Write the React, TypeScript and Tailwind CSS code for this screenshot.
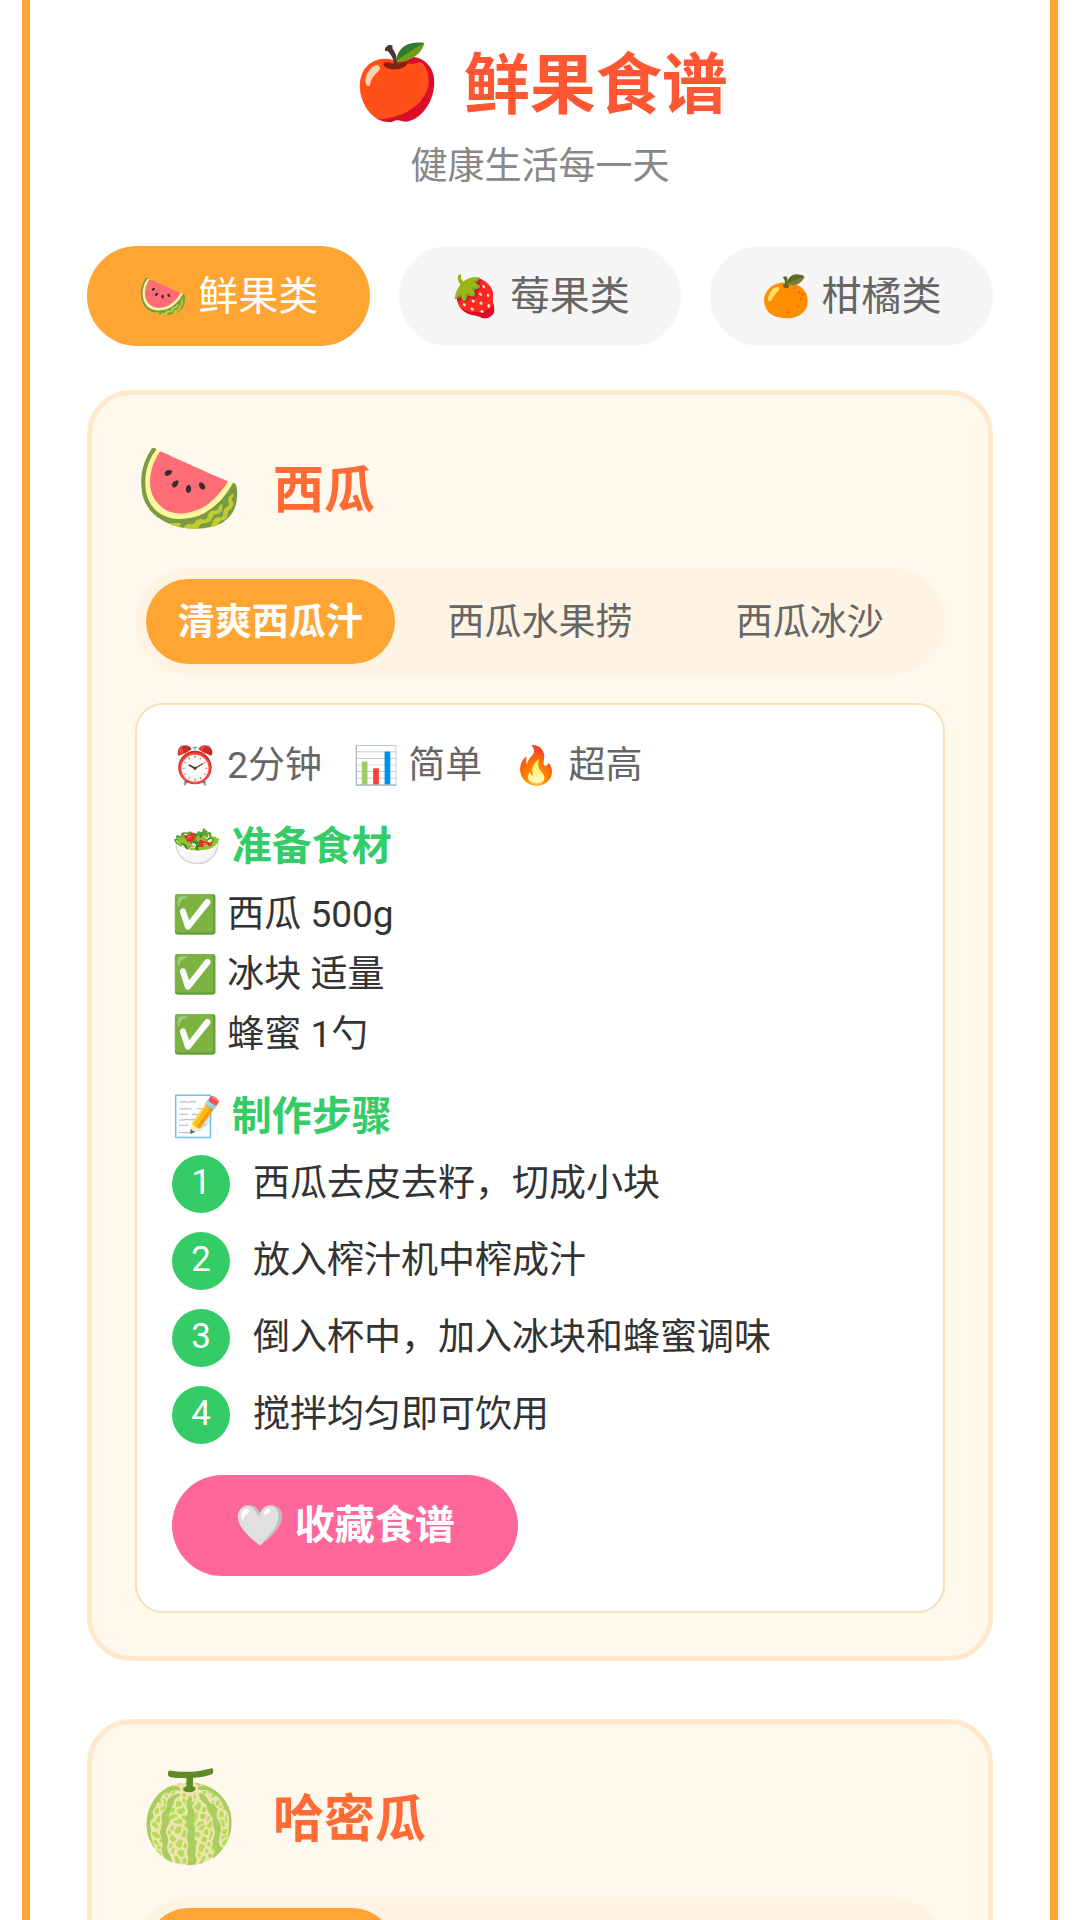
import { useState } from "react";

type Recipe = {
  title: string;
  time?: string;
  level?: string;
  heat?: string;
  ingredients?: string[];
  steps?: string[];
};

type Fruit = {
  icon: string;
  name: string;
  recipes: Recipe[];
};

const categories = [
  { icon: "🍉", label: "鲜果类" },
  { icon: "🍓", label: "莓果类" },
  { icon: "🍊", label: "柑橘类" },
];

const fruits: Fruit[] = [
  {
    icon: "🍉",
    name: "西瓜",
    recipes: [
      {
        title: "清爽西瓜汁",
        time: "2分钟",
        level: "简单",
        heat: "超高",
        ingredients: ["西瓜 500g", "冰块 适量", "蜂蜜 1勺"],
        steps: [
          "西瓜去皮去籽，切成小块",
          "放入榨汁机中榨成汁",
          "倒入杯中，加入冰块和蜂蜜调味",
          "搅拌均匀即可饮用",
        ],
      },
      { title: "西瓜水果捞" },
      { title: "西瓜冰沙" },
    ],
  },
  {
    icon: "🍈",
    name: "哈密瓜",
    recipes: [{ title: "哈密瓜汁" }, { title: "哈密瓜奶昔" }, { title: "哈密瓜沙拉" }],
  },
];

function RecipePanel({ recipe }: { recipe: Recipe }) {
  return (
    <div className="mt-7 rounded-[28px] border-2 border-[#f8dfb8] bg-white p-[35px]">
      <div className="flex gap-[31px] text-[37px] leading-[52px] text-[#666666]">
        <span>⏰ {recipe.time}</span>
        <span>📊 {recipe.level}</span>
        <span>🔥 {recipe.heat}</span>
      </div>

      <h3 className="mt-[25px] text-[40px] leading-[60px] font-bold text-[#33cc66]">🥗 准备食材</h3>
      <ul className="mt-2 text-[37px] leading-[60px] text-[#333333]">
        {recipe.ingredients?.map((item) => (
          <li key={item}>✅ {item}</li>
        ))}
      </ul>

      <h3 className="mt-[22px] text-[40px] leading-[60px] font-bold text-[#33cc66]">📝 制作步骤</h3>
      <ol className="mt-2 space-y-[19px] text-[#333333]">
        {recipe.steps?.map((step, index) => (
          <li key={step} className="flex items-center gap-[23px]">
            <span className="flex size-[58px] shrink-0 items-center justify-center rounded-full bg-[#33cc66] pb-0.5 text-[35px] text-white">
              {index + 1}
            </span>
            <span className="text-[37px] leading-[58px]">{step}</span>
          </li>
        ))}
      </ol>

      <button
        type="button"
        className="mt-[31px] h-[101px] rounded-full bg-[#ff6699] px-[63px] text-[40px] font-bold text-white"
      >
        🤍 收藏食谱
      </button>
    </div>
  );
}

function FruitCard({ fruit }: { fruit: Fruit }) {
  const [active, setActive] = useState(0);
  const recipe = fruit.recipes[active];

  return (
    <section className="rounded-[44px] border-5 border-[#ffe8cc] bg-[#fff8ed] p-[43px]">
      <div className="mb-[22px] flex h-[108px] items-start">
        <span className="w-[138px] text-[87px] leading-[100px]" aria-hidden="true">
          {fruit.icon}
        </span>
        <h2 className="text-[51px] leading-[106px] font-bold text-[#ff6b35]">{fruit.name}</h2>
      </div>

      <div className="flex gap-[21px] rounded-full bg-[#fff3e3] p-[11px]">
        {fruit.recipes.map((item, index) => (
          <button
            key={item.title}
            type="button"
            onClick={() => setActive(index)}
            className={`h-[85px] flex-1 rounded-full pt-0.5 text-[37px] ${
              index === active ? "bg-[#ffa533] font-bold text-white" : "text-[#666666]"
            }`}
          >
            {item.title}
          </button>
        ))}
      </div>

      {recipe.steps && <RecipePanel recipe={recipe} />}
    </section>
  );
}

export default function App() {
  const [category, setCategory] = useState(0);

  return (
    <div className="min-h-screen bg-white px-[22px] font-['Roboto','Noto_Sans_CJK_SC','Noto_Color_Emoji',sans-serif]">
      <main className="min-h-screen border-x-8 border-[#ffa533] px-[57px] pt-[37px]">
        <header className="text-center">
          <h1 className="flex items-start justify-center gap-[22px] text-[66px] leading-[98px] font-bold text-[#ff5733]">
            <span className="text-[72px] leading-[92px]" aria-hidden="true">
              🍎
            </span>
            鲜果食谱
          </h1>
          <p className="mt-0.5 text-[37px] leading-[60px] text-[#888888]">健康生活每一天</p>
        </header>

        <nav className="mt-[49px] flex gap-[29px]">
          {categories.map((item, index) => (
            <button
              key={item.label}
              type="button"
              onClick={() => setCategory(index)}
              className={`h-[100px] flex-1 rounded-full pt-0.5 text-[40px] ${
                index === category ? "bg-[#ffa533] text-white" : "bg-[#f5f5f5] text-[#666666]"
              }`}
            >
              {item.icon} {item.label}
            </button>
          ))}
        </nav>

        <div className="mt-11 space-y-[58px]">
          {fruits.map((fruit) => (
            <FruitCard key={fruit.name} fruit={fruit} />
          ))}
        </div>
      </main>
    </div>
  );
}
